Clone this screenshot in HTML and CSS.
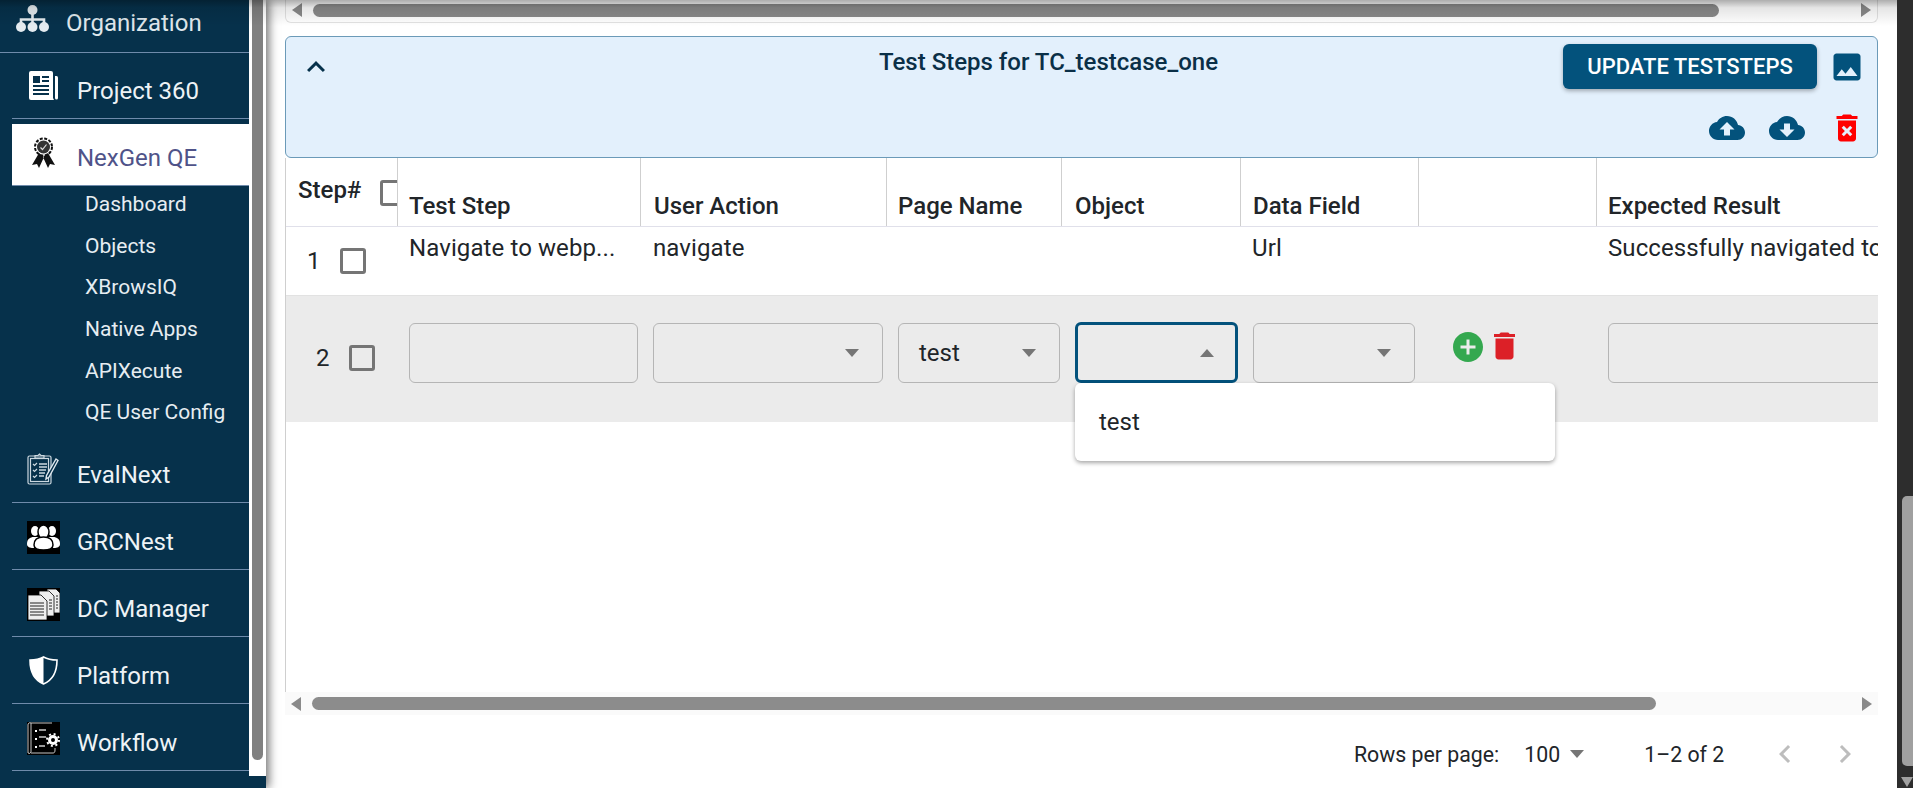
FILE: index.html
```html
<html>
<head>
<title>NexGen QE - Test Steps</title>
<link rel="stylesheet" href="styles.css">
</head>
<body>
    <div class="sombraArriba"></div>
    <aside class="sidebar">
        <nav class="menu">
            <a class="menuItem menuPrimero">
                <svg class="iconoMenu iconoOrg" viewBox="0 0 33 27"><circle cx="16.500" cy="5" r="5" fill="#e4ebf0"/><path d="M16.500 8v12M5 20v-5.500h23V20" stroke="#e4ebf0" stroke-width="2.600" fill="none"/><circle cx="5" cy="22" r="5" fill="#e4ebf0"/><circle cx="16.500" cy="22" r="5" fill="#e4ebf0"/><circle cx="28" cy="22" r="5" fill="#e4ebf0"/></svg>
                <span>Organization</span>
            </a>
            <a class="menuItem menuProyecto">
                <svg class="iconoMenu iconoProj" viewBox="0 0 29 29"><path d="M2 0h20a2 2 0 0 1 2 2v25l1 2H2a2 2 0 0 1-2-2V2a2 2 0 0 1 2-2z" fill="#fff"/><path d="M26 5h1.500a1.500 1.500 0 0 1 1.500 1.500V27a1.500 1.500 0 0 1-3 0z" fill="#fff"/><path d="M4 5h7v7H4zM13 5h7v2h-7zM13 9h7v2h-7zM4 14h16v2H4zM4 18h16v2H4zM4 22h16v2H4z" fill="#06314b"/></svg>
                <span>Project 360</span>
            </a>
            <a class="menuItem menuActivo">
                <svg class="iconoMenu iconoAward" viewBox="0 0 23 31"><path d="M7 16 0 28l5-1 2 4 5-11zM16 16l7 12-5-1-2 4-5-11z" fill="#111"/><circle cx="11.500" cy="10" r="8.500" fill="none" stroke="#111" stroke-width="2" stroke-dasharray="3 1.500"/><circle cx="11.500" cy="10" r="6.500" fill="#333"/><path d="M8.500 10.500l2 2 4-5" stroke="#ddd" stroke-width="1.200" fill="none"/></svg>
                <span>NexGen QE</span>
            </a>
            <div class="subMenu">
                <a>Dashboard</a>
                <a>Objects</a>
                <a>XBrowsIQ</a>
                <a>Native Apps</a>
                <a>APIXecute</a>
                <a>QE User Config</a>
            </div>
            <a class="menuItem">
                <svg class="iconoMenu iconoEval" viewBox="0 0 32 32"><g fill="none" stroke="#cbd8e0" stroke-width="1.200"><rect x="1" y="3" width="23" height="28" rx="1.500"/><rect x="3.500" y="5.500" width="18" height="23"/><path d="M8 5V2.500h3L12.500 1 14 2.500h3V5z"/><path d="M6 11l1.500 1.500L10 10M6 17l1.500 1.500L10 16M6 23l1.500 1.500L10 22"/></g><path d="M12 11h8M12 14h8M12 17h7M12 20h6M12 23h5" stroke="#cbd8e0" stroke-width="1.300"/><path d="M29 6l2 1.500L22 24l-3 2 .5-3.500z" fill="#06314b" stroke="#dfe8ee" stroke-width="1.400"/></svg>
                <span>EvalNext</span>
            </a>
            <a class="menuItem">
                <svg class="iconoMenu" viewBox="0 0 33 33"><rect width="33" height="33" fill="#000"/><g fill="#fff"><ellipse cx="8" cy="10" rx="4" ry="5"/><ellipse cx="25" cy="10" rx="4" ry="5"/><path d="M0 23c0-5 3-7 7-7h19c4 0 7 2 7 7 0 3-3 4-6 4H6c-3 0-6-1-6-4z"/></g><g fill="#fff" stroke="#000" stroke-width="1.500"><ellipse cx="16.500" cy="11" rx="5.500" ry="7"/><path d="M7 24c0-6 4-8 9.500-8S26 18 26 24c0 3-3 5-9.500 5S7 27 7 24z"/></g></svg>
                <span>GRCNest</span>
            </a>
            <a class="menuItem">
                <svg class="iconoMenu" viewBox="0 0 33 33"><rect width="33" height="33" fill="#000"/><g fill="#eee" stroke="#000" stroke-width=".8"><path d="M20 1h9l4 4v20H20z"/><path d="M12 3h10l5 5v20H12z"/><path d="M1 7h13l6 6v19H1z"/></g><path d="M3 15h14M3 18h14M3 21h14M3 24h14M3 27h14M22 12h3M22 15h3M22 18h3M22 21h3M29 8h2M29 11h2M29 14h2M29 17h2M29 20h2" stroke="#222" stroke-width="1.100"/></svg>
                <span>DC Manager</span>
            </a>
            <a class="menuItem">
                <svg class="iconoMenu iconoEscudo" viewBox="0 0 29 29"><path d="M14.500 1C10 3.500 5 4 1 4c0 11 4 20 13.500 24C24 24 28 15 28 4c-4 0-9-.5-13.500-3z" fill="none" stroke="#fff" stroke-width="1.600"/><path d="M14.500 1C10 3.500 5 4 1 4c0 11 4 20 13.500 24z" fill="#fff"/></svg>
                <span>Platform</span>
            </a>
            <a class="menuItem">
                <svg class="iconoMenu" viewBox="0 0 33 33"><rect width="33" height="33" fill="#000"/><path d="M4 1v29a2 2 0 0 1-3 1V3a2 2 0 0 1 3-2h21M4 31h22c1.500 0 2-1 2-3v-2" fill="none" stroke="#ddd" stroke-width=".9"/><path d="M8 9h2M8 17h2M8 25h2" stroke="#fff" stroke-width="2"/><path d="M12 8h7M12 15h7M12 24h6" stroke="#ccc" stroke-width="1.300"/><circle cx="26" cy="18" r="3.500" fill="none" stroke="#fff" stroke-width="3"/><circle cx="26" cy="18" r="6" fill="none" stroke="#fff" stroke-width="2" stroke-dasharray="2 2.700"/></svg>
                <span>Workflow</span>
            </a>
        </nav>
        <div class="sideScroll"><div class="sideThumb"></div></div>
    </aside>

    <main class="contenido">
        <div class="tablaArriba">
            <i class="flechaIzq"></i>
            <div class="carril"><div class="thumbArriba"></div></div>
            <i class="flechaDer"></i>
        </div>

        <section class="panel">
            <svg class="chevron" viewBox="0 0 24 24"><path d="M7.410 15.410 12 10.830l4.590 4.580L18 14l-6-6-6 6z"/></svg>
            <h2 class="panelTitulo">Test Steps for TC_testcase_one</h2>
            <div class="panelAcciones">
                <div class="accionesFila">
                    <button class="botonUpdate">Update Teststeps</button>
                    <svg class="iconoGrande azul" viewBox="0 0 24 24"><path d="M21 19V5c0-1.100-.9-2-2-2H5c-1.100 0-2 .9-2 2v14c0 1.100.9 2 2 2h14c1.100 0 2-.9 2-2zM8.500 13.500l2.500 3.010L14.500 12l4.500 6H5l3.500-4.500z"/></svg>
                </div>
                <div class="accionesFila filaIconos">
                    <svg class="iconoNube azul" viewBox="0 0 24 24"><path d="M19.350 10.040C18.670 6.590 15.640 4 12 4 9.110 4 6.600 5.640 5.350 8.040 2.340 8.360 0 10.910 0 14c0 3.310 2.690 6 6 6h13c2.760 0 5-2.240 5-5 0-2.640-2.050-4.780-4.650-4.960zM14 13v4h-4v-4H7l5-5 5 5h-3z"/></svg>
                    <svg class="iconoNube azul" viewBox="0 0 24 24"><path d="M19.350 10.040C18.670 6.590 15.640 4 12 4 9.110 4 6.600 5.640 5.350 8.040 2.340 8.360 0 10.910 0 14c0 3.310 2.690 6 6 6h13c2.760 0 5-2.240 5-5 0-2.640-2.050-4.780-4.650-4.960zM17 13l-5 5-5-5h3V9h4v4h3z"/></svg>
                    <svg class="iconoGrande rojo" viewBox="0 0 24 24"><path d="M6 19c0 1.100.9 2 2 2h8c1.100 0 2-.9 2-2V7H6v12zm2.460-7.120 1.410-1.410L12 12.590l2.120-2.120 1.410 1.410L13.410 14l2.120 2.120-1.410 1.410L12 15.410l-2.120 2.120-1.410-1.410L10.590 14l-2.130-2.120zM15.500 4l-1-1h-5l-1 1H5v2h14V4z"/></svg>
                </div>
            </div>
        </section>

        <section class="tabla">
            <div class="fila filaHead">
                <div class="celdaStep">
                    <span>Step#</span>
                    <span class="check checkHead"></span>
                </div>
                <div class="th thUno">Test Step</div>
                <div class="th thDos">User Action</div>
                <div class="th thUno">Page Name</div>
                <div class="th thDos">Object</div>
                <div class="th">Data Field</div>
                <div class="th"></div>
                <div class="th thUno">Expected Result</div>
            </div>

            <div class="fila filaUno">
                <div class="numero"><span>1</span><span class="check"></span></div>
                <div class="td">Navigate to webp...</div>
                <div class="td tdAccion">navigate</div>
                <div class="td"></div>
                <div class="td"></div>
                <div class="td">Url</div>
                <div class="td"></div>
                <div class="td">Successfully navigated to</div>
            </div>

            <div class="fila filaDos">
                <div class="numero numeroDos"><span>2</span><span class="check"></span></div>
                <div class="ctl ctlTexto"><div class="campo"></div></div>
                <div class="ctl ctlAccion"><div class="campo"><i class="flechaAbajo"></i></div></div>
                <div class="ctl ctlPagina"><div class="campo">test<i class="flechaAbajo"></i></div></div>
                <div class="ctl ctlObjeto">
                    <div class="campo campoActivo"><i class="flechaArriba"></i></div>
                    <div class="desplegable"><div class="opcion">test</div></div>
                </div>
                <div class="ctl ctlDato"><div class="campo"><i class="flechaAbajo"></i></div></div>
                <div class="ctlIconos">
                    <svg class="iconoAdd" viewBox="2 2 20 20"><path d="M12 2C6.480 2 2 6.480 2 12s4.480 10 10 10 10-4.480 10-10S17.520 2 12 2zm5 11h-4v4h-2v-4H7v-2h4V7h2v4h4v2z"/></svg>
                    <svg class="iconoBorrar" viewBox="5 3 14 18"><path d="M6 19c0 1.100.9 2 2 2h8c1.100 0 2-.9 2-2V7H6v12zM19 4h-3.500l-1-1h-5l-1 1H5v2h14V4z"/></svg>
                </div>
                <div class="ctl ctlUltimo"><div class="campo"></div></div>
            </div>
        </section>

        <div class="tablaAbajo">
            <i class="flechaIzq"></i>
            <div class="carril"><div class="thumbAbajo"></div></div>
            <i class="flechaDer"></i>
        </div>

        <footer class="paginacion">
            <span>Rows per page:</span>
            <span class="porPagina">100</span>
            <i class="flechaAbajo flechaPag"></i>
            <span class="rango">1–2 of 2</span>
            <svg class="navPag navPrev" viewBox="0 0 24 24"><path d="M15.410 7.410 14 6l-6 6 6 6 1.410-1.410L10.830 12z"/></svg>
            <svg class="navPag" viewBox="0 0 24 24"><path d="M10 6 8.590 7.410 13.170 12l-4.580 4.590L10 18l6-6z"/></svg>
        </footer>
    </main>

    <div class="pageScroll">
        <div class="pageThumb"></div>
        <i class="pageFlecha"></i>
    </div>
</body>
</html>
```

FILE: styles.css
```css
* {
    box-sizing: border-box;
    padding: 0px;
    margin: 0px;
}
html, body {
    height: 100%;
    overflow: hidden;
}
body {
    display: flex;
    background-color: white;
    font-family: Roboto, "Liberation Sans", sans-serif;
    color: #212529;
}
.sombraArriba {
    position: absolute;
    top: 0px;
    left: 0px;
    right: 16px;
    height: 26px;
    background: linear-gradient(rgba(0,0,0,0.32), rgba(0,0,0,0.1) 30%, rgba(0,0,0,0));
    pointer-events: none;
    z-index: 20;
}

/* sidebar */
.sidebar {
    width: 266px;
    flex-shrink: 0;
    display: flex;
    align-items: flex-start;
    background-color: #06314b;
    box-shadow: 3px 0px 9px rgba(0,0,0,0.55);
    z-index: 10;
}
.menu {
    width: 249px;
    height: 776px;
    overflow: hidden;
    flex-shrink: 0;
}
.menuItem {
    display: flex;
    align-items: center;
    height: 67px;
    margin-left: 12px;
    padding-left: 65px;
    position: relative;
    color: #eef3f6;
    font-size: 24px;
    border-bottom: 1px solid #6f8bab;
}
.menuItem span {
    padding-top: 11px;
}
.menuPrimero {
    height: 53px;
    margin-left: 0px;
    padding-left: 66px;
    color: #dfe7ec;
}
.menuPrimero span {
    padding-top: 0px;
    padding-bottom: 6px;
}
.menuProyecto {
    height: 66px;
}
.menuActivo {
    height: 62px;
    margin-top: 5px;
    background-color: white;
    color: #4f5389;
}
.menuActivo span {
    padding-top: 6px;
}
.iconoMenu {
    position: absolute;
    left: 15px;
    top: 18px;
    width: 33px;
    height: 33px;
}
.iconoOrg {
    left: 16px;
    top: 5px;
    height: 27px;
}
.iconoProj {
    left: 17px;
    top: 18px;
    width: 29px;
    height: 29px;
}
.iconoEscudo {
    left: 17px;
    top: 19px;
    width: 29px;
    height: 29px;
}
.iconoAward {
    left: 20px;
    top: 13px;
    width: 23px;
    height: 31px;
}
.iconoEval {
    top: 17px;
    width: 32px;
    height: 32px;
}
.subMenu {
    height: 250px;
    display: flex;
    flex-direction: column;
}
.subMenu a {
    height: 41.800px;
    line-height: 36px;
    padding-left: 85px;
    color: #e6edf2;
    font-size: 21px;
}
.sideScroll {
    width: 17px;
    height: 776px;
    padding: 0px 3px;
    background-color: white;
}
.sideThumb {
    height: 760px;
    background-color: #808080;
    border-radius: 0px 0px 6px 6px;
}

/* contenido */
.contenido {
    flex: 1;
    min-width: 0;
    padding: 0px 19px;
    display: flex;
    flex-direction: column;
}
.tablaArriba {
    height: 23px;
    display: flex;
    align-items: center;
    flex-shrink: 0;
    margin-bottom: 13px;
    padding: 0px 6px 2px 6px;
    border: 1px solid #e2e2e2;
    border-top: none;
    border-radius: 0px 0px 6px 6px;
}
.tablaAbajo {
    height: 23px;
    display: flex;
    align-items: center;
    flex-shrink: 0;
    padding: 0px 6px;
    background-color: #fafafa;
}
.carril {
    flex: 1;
    margin: 0px 10px 0px 11px;
}
.thumbArriba {
    width: 1406px;
    height: 13px;
    border-radius: 7px;
    background-color: #8a8a8a;
}
.thumbAbajo {
    width: 1344px;
    height: 13px;
    border-radius: 7px;
    background-color: #8c8c8c;
}
.flechaIzq {
    width: 0px;
    height: 0px;
    border-top: 7px solid transparent;
    border-bottom: 7px solid transparent;
    border-right: 10px solid #8a8a8a;
}
.flechaDer {
    width: 0px;
    height: 0px;
    border-top: 7px solid transparent;
    border-bottom: 7px solid transparent;
    border-left: 10px solid #8a8a8a;
}

/* panel azul */
.panel {
    height: 122px;
    flex-shrink: 0;
    display: flex;
    background-color: #e3f0fc;
    border: 1px solid #6b9ab8;
    border-radius: 6px;
}
.chevron {
    width: 36px;
    height: 36px;
    margin: 12px 0px 0px 12px;
    fill: #06314b;
}
.panelTitulo {
    margin: 11px 0px 0px 545px;
    font-size: 24px;
    font-weight: 500;
    color: #0a2f47;
    white-space: nowrap;
}
.panelAcciones {
    margin-left: auto;
    padding: 7px 12px 0px 0px;
}
.accionesFila {
    display: flex;
    align-items: center;
    gap: 12px;
}
.filaIconos {
    justify-content: flex-end;
    gap: 24px;
    margin-top: 21px;
}
.botonUpdate {
    width: 254px;
    height: 45px;
    border: none;
    border-radius: 6px;
    background-color: #03527c;
    color: white;
    font-family: inherit;
    font-size: 22px;
    font-weight: 500;
    text-transform: uppercase;
    box-shadow: 0px 2px 4px rgba(0,0,0,0.3);
}
.iconoGrande {
    width: 36px;
    height: 36px;
}
.iconoNube {
    width: 36px;
    height: 36px;
}
.azul {
    fill: #03527c;
}
.rojo {
    fill: #ff0000;
}

/* tabla */
.tabla {
    height: 534px;
    flex-shrink: 0;
    border-left: 1px solid #cfcfcf;
    overflow-x: clip;
}
.fila {
    display: grid;
    grid-template-columns: 111px 243px 246px 175px 179px 178px 178px 282px;
    font-size: 24px;
}
.filaHead {
    height: 69px;
    border-bottom: 1px solid #e0e0ea;
    font-weight: 500;
}
.celdaStep {
    display: flex;
    gap: 19px;
    padding: 18px 0px 0px 12px;
    overflow: hidden;
    white-space: nowrap;
}
.th {
    padding: 34px 0px 0px 12px;
    border-left: 1px solid #cfcfcf;
    white-space: nowrap;
}
.thUno {
    padding-left: 11px;
}
.thDos {
    padding-left: 13px;
}
.filaUno {
    height: 69px;
    border-bottom: 1px solid #e2e2e2;
}
.td {
    padding: 7px 0px 0px 12px;
    white-space: nowrap;
    overflow: hidden;
    letter-spacing: 0.1px;
}
.tdAccion {
    padding-left: 13px;
}
.numero {
    display: flex;
    align-items: center;
    gap: 19px;
    padding-left: 21px;
}
.numeroDos {
    padding-left: 30px;
    padding-top: 49px;
    gap: 19px;
    align-items: flex-start;
    line-height: 26px;
}
.check {
    display: block;
    width: 26px;
    height: 26px;
    flex-shrink: 0;
    border: 3px solid #757575;
    border-radius: 3px;
}
.checkHead {
    margin-top: 4px;
}
.filaDos {
    height: 126px;
    background-color: #ebebeb;
}
.ctl {
    position: relative;
}
.ctlTexto {
    padding: 27px 2px 0px 12px;
}
.ctlAccion {
    padding: 27px 3px 0px 13px;
}
.ctlPagina {
    padding: 27px 1px 0px 12px;
}
.ctlObjeto {
    padding: 26px 2px 0px 14px;
}
.ctlDato {
    padding: 27px 3px 0px 13px;
}
.ctlUltimo {
    padding: 27px 0px 0px 12px;
    overflow: hidden;
}
.campo {
    height: 60px;
    display: flex;
    align-items: center;
    justify-content: space-between;
    padding: 0px 23px 0px 20px;
    border: 1px solid #b5b5b5;
    border-radius: 6px;
}
.ctlUltimo .campo {
    width: 320px;
}
.campoActivo {
    height: 61px;
    border: 3px solid #03527c;
    padding-right: 21px;
}
.campo i {
    margin-left: auto;
}
.flechaAbajo {
    width: 0px;
    height: 0px;
    border-left: 7px solid transparent;
    border-right: 7px solid transparent;
    border-top: 8px solid #757575;
}
.flechaArriba {
    width: 0px;
    height: 0px;
    border-left: 7px solid transparent;
    border-right: 7px solid transparent;
    border-bottom: 8px solid #757575;
}
.desplegable {
    position: absolute;
    top: 87px;
    left: 14px;
    width: 480px;
    height: 78px;
    background-color: white;
    border-radius: 6px;
    box-shadow: 0px 2px 4px rgba(0,0,0,0.35);
    z-index: 5;
}
.opcion {
    padding: 25px 0px 0px 24px;
}
.ctlIconos {
    display: flex;
    align-items: flex-start;
    gap: 11px;
    padding: 36px 0px 0px 35px;
}
.iconoAdd {
    width: 30px;
    height: 30px;
    fill: #34a84f;
}
.iconoBorrar {
    width: 21px;
    height: 28px;
    fill: #dc2027;
}

/* paginacion */
.paginacion {
    height: 73px;
    display: flex;
    align-items: center;
    padding: 5px 0px 0px 1069px;
    font-size: 21.300px;
}
.porPagina {
    margin-left: 25px;
}
.flechaPag {
    margin-left: 10px;
}
.rango {
    margin-left: 60px;
}
.navPag {
    width: 36px;
    height: 36px;
    margin-left: 24px;
    fill: #bdbdbd;
}
.navPrev {
    margin-left: 43px;
}

/* scroll de la pagina */
.pageScroll {
    width: 16px;
    flex-shrink: 0;
    padding-top: 496px;
    padding-left: 5px;
    background-color: #2d2d2d;
}
.pageThumb {
    height: 270px;
    background-color: #a0a0a0;
    border-radius: 5px 0px 0px 5px;
}
.pageFlecha {
    display: block;
    width: 0px;
    height: 0px;
    margin: 11px 0px 0px -1px;
    border-left: 6px solid transparent;
    border-right: 6px solid transparent;
    border-top: 10px solid #a0a0a0;
}
```
